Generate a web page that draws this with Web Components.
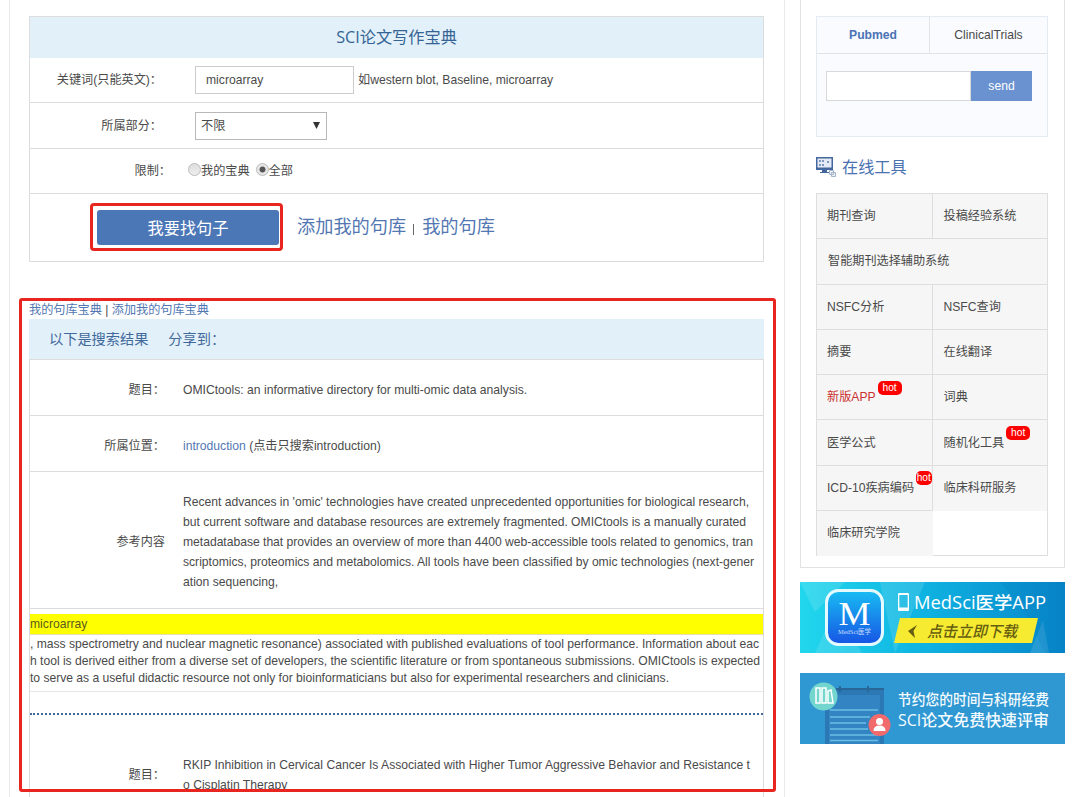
<!DOCTYPE html>
<html lang="zh-CN">
<head>
<meta charset="utf-8">
<title>SCI论文写作宝典</title>
<style>
html,body {margin:0; height:797px; overflow:hidden; background:#fff;}
body {font:12.15px/20px "Liberation Sans","Noto Sans CJK SC",sans-serif; color:#4a4a4a;}
</style>
</head>
<body>
<medsci-page>
    <search-form slot="main">
        <form-row label="关键词(只能英文)：" style="--h:44px">
            <text-field value="microarray"></text-field><span>如western blot, Baseline, microarray</span>
        </form-row>
        <form-row label="所属部分：" style="--h:45px">
            <drop-down>不限</drop-down>
        </form-row>
        <form-row label="限制：" style="--h:44px; --label:141px; --gap:17px">
            <radio-option>我的宝典</radio-option><radio-option checked>全部</radio-option>
        </form-row>
    </search-form>
    <search-results slot="main">
        <result-row label="题目：" style="--h:55px"><text-line>OMICtools: an informative directory for multi-omic data analysis.</text-line></result-row>
        <result-row label="所属位置：" style="--h:55px"><text-line><span style="color:#5277b2">introduction</span> (点击只搜索introduction)</text-line></result-row>
        <result-row label="参考内容" style="--h:136px; --nudge:3px">
            <text-line w="566">Recent advances in 'omic' technologies have created unprecedented opportunities for biological research,</text-line>
            <text-line w="563">but current software and database resources are extremely fragmented. OMICtools is a manually curated</text-line>
            <text-line w="570">metadatabase that provides an overview of more than 4400 web-accessible tools related to genomics, tran</text-line>
            <text-line w="571">scriptomics, proteomics and metabolomics. All tools have been classified by omic technologies (next-gener</text-line>
            <text-line>ation sequencing,</text-line>
        </result-row>
        <match-text word="microarray">
            <text-line w="729">, mass spectrometry and nuclear magnetic resonance) associated with published evaluations of tool performance. Information about eac</text-line>
            <text-line w="730">h tool is derived either from a diverse set of developers, the scientific literature or from spontaneous submissions. OMICtools is expected</text-line>
            <text-line w="639">to serve as a useful didactic resource not only for bioinformaticians but also for experimental researchers and clinicians.</text-line>
        </match-text>
        <result-row label="题目：" style="--h:116px">
            <text-line w="567">RKIP Inhibition in Cervical Cancer Is Associated with Higher Tumor Aggressive Behavior and Resistance t</text-line>
            <text-line>o Cisplatin Therapy</text-line>
        </result-row>
    </search-results>
    <pubmed-box slot="side"></pubmed-box>
    <tool-grid slot="side">
        <tool-cell>期刊查询</tool-cell><tool-cell>投稿经验系统</tool-cell>
        <tool-cell wide>智能期刊选择辅助系统</tool-cell>
        <tool-cell>NSFC分析</tool-cell><tool-cell>NSFC查询</tool-cell>
        <tool-cell>摘要</tool-cell><tool-cell>在线翻译</tool-cell>
        <tool-cell hot style="color:#cb2f2f">新版APP</tool-cell><tool-cell>词典</tool-cell>
        <tool-cell>医学公式</tool-cell><tool-cell hot>随机化工具</tool-cell>
        <tool-cell hot>ICD-10疾病编码</tool-cell><tool-cell last>临床科研服务</tool-cell>
        <tool-cell last>临床研究学院</tool-cell>
    </tool-grid>
    <app-banner slot="ads"></app-banner>
    <review-banner slot="ads"></review-banner>
</medsci-page>

<script>
const define = (name, html, setup) => customElements.define(name, class extends HTMLElement {
    constructor() {
        super();
        this.attachShadow({ mode: 'open' }).innerHTML = html;
    }
    connectedCallback() {
        if (setup) setup(this, this.shadowRoot);
    }
});

define('medsci-page', `
<style>
:host {display:flex; width:1080px; height:797px; overflow:hidden; box-sizing:border-box; padding-left:9px;}
main {
    width:776px; box-sizing:border-box; flex:none;
    border:solid #e9e9e9; border-width:0 1px;
    padding:16px 20px 0 19px;
}
aside {width:265px; margin-left:15px; flex:none;}
section {
    height:568px; box-sizing:border-box;
    border:1px solid #e2e2e2; border-top:0;
    padding:16px 15px 0;
}
nav {display:flex; flex-direction:column; gap:20px; margin-top:14px;}
</style>
<main><slot name="main"></slot></main>
<aside><section><slot name="side"></slot></section><nav><slot name="ads"></slot></nav></aside>`);

define('search-form', `
<style>
:host {display:block; width:735px; height:246px; box-sizing:border-box; border:1px solid #dcdcdc;}
h2 {
    margin:0; height:41px; line-height:41px; text-align:center;
    background:#e2f0fa; color:#356494;
    font:400 16.2px/41px "Open Sans","Noto Sans CJK SC",sans-serif;
}
footer {display:flex; align-items:center; height:66px; padding-left:60px; color:#5277b2; font-size:18.2px;}
.frame {box-sizing:border-box; width:193px; height:48px; border:3px solid #e8251f; border-radius:4px; padding:4px 3px 3px 4px;}
button {
    display:block; width:182px; height:35px; border:0; border-radius:3px; padding:0;
    background:#4c77b7; color:#fff; font:16.2px/35px "Noto Sans CJK SC",sans-serif;
}
a:first-of-type {margin-left:14px;}
i {width:1px; height:11px; background:#666; margin:4px 8px 0 7px;}
</style>
<h2>SCI论文写作宝典</h2>
<slot></slot>
<footer><div class="frame"><button>我要找句子</button></div><a>添加我的句库</a><i></i><a>我的句库</a></footer>`);

define('form-row', `
<style>
:host {display:flex; align-items:center; height:var(--h); border-bottom:1px solid #dcdcdc; white-space:nowrap;}
label {width:var(--label,132px); margin-right:var(--gap,33px); text-align:right; flex:none;}
</style>
<label></label><slot></slot>`, (el, root) => root.querySelector('label').textContent = el.getAttribute('label'));

define('text-field', `
<style>
:host {display:block; margin-right:4px;}
input {
    display:block; box-sizing:border-box; width:159px; height:28px; margin:0; padding:0 10px;
    border:1px solid #ccc; font:inherit; color:inherit; background:#fff; outline:0;
}
</style>
<input>`, (el, root) => root.querySelector('input').value = el.getAttribute('value'));

define('drop-down', `
<style>
:host {
    display:flex; justify-content:space-between; align-items:center; box-sizing:border-box;
    width:132px; height:28px; padding:0 6px 0 5px; border:1px solid #b8b8b8;
}
svg {width:7px; height:7px; fill:#333;}
</style>
<slot></slot><svg viewBox="0 0 7 7"><path d="M0 0H7L3.5 7Z"/></svg>`);

define('radio-option', `
<style>
:host {display:flex; align-items:center; margin-right:6px;}
i {
    box-sizing:border-box; width:13px; height:13px; border-radius:50%; margin-bottom:4px;
    border:1px solid #bbb; background:linear-gradient(#ddd,#eee);
}
:host([checked]) i {background:radial-gradient(circle,#555 2.6px,#e6e6e6 3.4px);}
</style>
<i></i><slot></slot>`);

define('search-results', `
<style>
:host {display:block; position:relative; width:735px; padding-top:38px;}
p {margin:0; height:19px; line-height:20px; white-space:pre;}
a {color:#5277b2;}
h3 {
    display:flex; gap:20px; margin:0; height:40px; padding-left:20px;
    background:#e2f0fa; color:#41699a; font-weight:400; font-size:14.2px; line-height:41px;
}
div {border:1px solid #dcdcdc; border-bottom:0;}
/* highlight frame drawn over the list */
mark {
    position:absolute; left:-10px; top:36px; width:757px; height:494px; box-sizing:border-box;
    border:3px solid #e8251f; border-radius:3px; background:none; pointer-events:none;
}
</style>
<p><a>我的句库宝典</a> | <a>添加我的句库宝典</a></p>
<h3><span>以下是搜索结果</span><span>分享到：</span></h3>
<div><slot></slot></div>
<mark></mark>`);

define('result-row', `
<style>
:host {display:flex; align-items:center; height:var(--h); border-bottom:1px solid #dcdcdc; padding-top:0;}
label {width:135px; text-align:right; margin:4px 18px 0 0; flex:none;}
section {margin-top:var(--nudge,4px);}
</style>
<label></label><section><slot></slot></section>`, (el, root) => root.querySelector('label').textContent = el.getAttribute('label'));

/* one line of text; "w" spreads it to the given width */
define('text-line', `
<style>
:host {display:block; white-space:nowrap;}
</style>
<slot></slot>`, el => {
    const w = el.getAttribute('w');
    if (!w) return;
    const range = document.createRange();
    range.selectNodeContents(el);
    const now = range.getBoundingClientRect().width;
    el.style.letterSpacing = (w - now) / el.textContent.length + 'px';
});

define('match-text', `
<style>
:host {display:block; line-height:17px; height:102px; border-bottom:2px dotted #41699a; padding-top:5px; margin-bottom:0; box-sizing:border-box; height:106px;}
mark {display:block; height:20px; line-height:20px; background:#ff0; color:#5a5a20; border-bottom:1px solid #e4e0b0; margin-bottom:1px;}
div {height:56px; box-sizing:border-box; border-bottom:1px solid #e6e6e6;}
</style>
<mark></mark><div><slot></slot></div>`, (el, root) => root.querySelector('mark').textContent = el.getAttribute('word'));

define('pubmed-box', `
<style>
:host {display:block; width:232px; height:121px; box-sizing:border-box; border:1px solid #e4ebf3; background:#f9fbff;}
header {display:flex; height:36px; line-height:36px; text-align:center; border-bottom:1px solid #dfe4ea;}
b {width:112px; border-right:1px solid #dfe4ea; color:#4a72b5;}
span {flex:1;}
form {display:flex; margin:17px 0 0 9px;}
input {box-sizing:border-box; width:145px; height:30px; border:1px solid #d8d8d8; margin:0; background:#fff;}
button {width:61px; height:30px; border:0; padding:0; color:#fff; background:#6a92d0; font:12.15px "Liberation Sans",sans-serif;}
</style>
<header><b>Pubmed</b><span>ClinicalTrials</span></header>
<form><input><button type="button">send</button></form>`);

define('tool-grid', `
<style>
h2 {display:flex; align-items:center; gap:6px; margin:16px 0 13px; height:27px; color:#4a72b0; font-size:16.2px; font-weight:400;}
svg {width:20px; height:20px;}
:host {display:block;}
div {
    display:grid; grid-template-columns:115.5px 114.5px; grid-auto-rows:45.3px;
    width:232px; height:363px; box-sizing:border-box; border:1px solid #dedede;
}
</style>
<h2>
    <svg viewBox="0 0 20 20">
        <path d="M0 0H17V13H11V15H13V16H4V15H6V13H0Z" fill="#44689d"/>
        <path d="M1.5 1.5H15.5V10.5H1.5Z" fill="#e4ebf6"/>
        <path d="M3 3H5V5H3ZM6 3H8V5H6ZM3 7H5V9H3ZM6 7H8V9H6ZM11 4H13V6H11Z" fill="#7d97bd"/>
        <path d="M13.5 13.5H17.5V17.5H13.5ZM15.5 15.5H19.5V19.5H15.5Z" fill="#eef1f6" stroke="#a5b4cb"/>
    </svg>在线工具
</h2>
<div><slot></slot></div>`);

define('tool-cell', `
<style>
:host {
    display:flex; align-items:center; box-sizing:border-box; padding-left:10px; white-space:nowrap;
    background:#f6f6f6; border:solid #dedede; border-width:0 0 1px;
}
:host(:nth-child(2)),:host([wide]) {border-right:0;}
:host([wide]) {grid-column:span 2;}
:host([last]) {border-bottom-color:transparent;}
b {display:none;}
:host([hot]) b {
    display:block; margin:-19px 0 0 2px; width:24px; height:14px; border-radius:5px;
    background:#f00; color:#fff; font:10.2px/14px "Liberation Sans",sans-serif; text-align:center;
    position:relative; z-index:1;
}
:host([split]) {border-right-width:1px;}
</style>
<slot></slot><b>hot</b>`, el => {
    // every narrow cell of the first column closes with a divider
    const row = [...el.parentNode.children].filter(c => !c.hasAttribute('wide'));
    if (!el.hasAttribute('wide') && row.indexOf(el) % 2 === 0 && !el.matches(':last-child')) el.toggleAttribute('split', true);
    else el.style.paddingLeft = row.indexOf(el) % 2 ? '11px' : '';
});

define('app-banner', `
<style>
:host {display:block; height:71px;}
svg {display:block;}
</style>
<svg width="265" height="71" viewBox="0 0 265 71">
    <defs>
        <linearGradient id="sky"><stop stop-color="#22d7ed"/><stop offset=".45" stop-color="#0fb4e2"/><stop offset="1" stop-color="#0785c9"/></linearGradient>
        <linearGradient id="app" x2="0" y2="1"><stop stop-color="#18bdf3"/><stop offset="1" stop-color="#1754e4"/></linearGradient>
    </defs>
    <path fill="url(#sky)" d="M0 0H265V71H0Z"/>
    <path fill="#fff" opacity=".12" d="M0 0H45L15 30ZM15 71L36 25 62 71ZM80 0H125L95 71ZM230 71L243 38 249 71Z"/>
    <path fill="#0478bd" opacity=".18" d="M200 0H265V71H245L225 30Z"/>
    <rect x="26.5" y="8.5" width="56" height="54" rx="12" fill="url(#app)" stroke="#e5faff" stroke-width="3"/>
    <text x="54.5" y="43" text-anchor="middle" textLength="32" lengthAdjust="spacingAndGlyphs" font-family="Liberation Serif" font-size="34" fill="#fff">M</text>
    <text x="54.5" y="52" text-anchor="middle" textLength="33" lengthAdjust="spacingAndGlyphs" font-family="Liberation Serif,Noto Sans CJK SC,serif" font-size="6.5" fill="#cdf">MedSci医学</text>
    <path fill="#fff" fill-rule="evenodd" d="M99 11H108Q109 11 109 12V28Q109 29 108 29H99Q98 29 98 28V12Q98 11 99 11ZM99.3 13V25.5H107.7V13Z"/>
    <text x="114" y="27" textLength="132" lengthAdjust="spacingAndGlyphs" font-family="Open Sans,Noto Sans CJK SC,sans-serif" font-weight="500" font-size="17.5" fill="#fff">MedSci医学APP</text>
    <path fill="#f7eb32" d="M100 36H238L232 61H94Z"/>
    <path fill="#665e10" d="M117 43L108 49 115 56 113.5 49Z"/>
    <text x="127" y="55" textLength="90" lengthAdjust="spacingAndGlyphs" font-family="Noto Sans CJK SC,sans-serif" font-weight="500" font-size="15.5" font-style="italic" fill="#665e10">点击立即下载</text>
</svg>`);

define('review-banner', `
<style>
:host {display:block; height:71px;}
svg {display:block;}
</style>
<svg width="265" height="71" viewBox="0 0 265 71">
    <path fill="#2f97d2" d="M0 0H265V71H0Z"/>
    <path fill="#2c78b5" d="M25 16H84V71H25Z"/>
    <path fill="#3285c2" d="M29 22H80V71H29Z"/>
    <path d="M40 19V13M68 19V13M36 16H84" stroke="#286698" stroke-width="2"/>
    <path d="M30 37H78M30 44H70M30 50H66M30 56H68M30 62H78M30 67.500H78" stroke="#6ac0e4" stroke-width="1.6"/>
    <circle cx="23.500" cy="23.500" r="14" fill="#72d5ce"/>
    <path d="M16 15H20V30H16ZM22 15H26V30H22ZM28 18L31 17 33 30H28Z" fill="#72d5ce" stroke="#fff" stroke-width="1.500"/>
    <circle cx="79.500" cy="52" r="11" fill="#f16b6c"/>
    <circle cx="79.500" cy="48.500" r="3.500" fill="#fff"/>
    <path d="M73.500 58Q73.500 52.500 79.500 52.500T85.500 58Z" fill="#fff"/>
    <g font-family="Open Sans,Noto Sans CJK SC,sans-serif" font-weight="500" fill="#f4fbff">
        <text x="98" y="32" textLength="151" lengthAdjust="spacingAndGlyphs" font-size="15">节约您的时间与科研经费</text>
        <text x="98" y="53" textLength="151" lengthAdjust="spacingAndGlyphs" font-size="15.500">SCI论文免费快速评审</text>
    </g>
</svg>`);
</script>
</body>
</html>
